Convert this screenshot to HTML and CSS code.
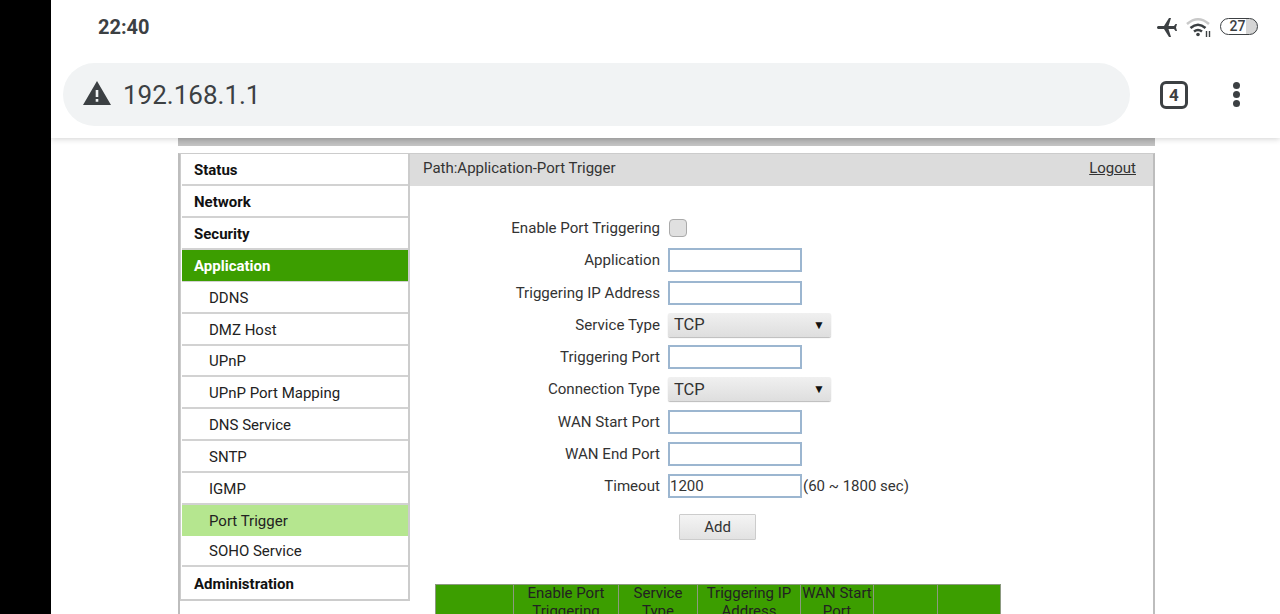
FILE: index.html
```html
<!DOCTYPE html>
<html lang="en">
<head>
<meta charset="utf-8">
<title>192.168.1.1</title>
<link rel="stylesheet" href="styles.css">
</head>
<body>
<div class="black-edge"></div>
<div class="screen">
  <header class="chrome">
    <div class="status-bar">
      <span class="clock">22:40</span>
      <div class="status-icons">
        <svg class="ic-plane" viewBox="0 0 24 24"><path transform="rotate(-90 12 12)" d="M21 16v-2l-8-5V3.5c0-.83-.67-1.5-1.5-1.5S10 2.67 10 3.5V9l-8 5v2l8-2.5V19l-2 1.5V22l3.500-1 3.500 1v-1.500L13 19v-5.500l8 2.500z"/></svg>
        <svg class="ic-wifi" viewBox="0 0 26 22"><path d="M2 8Q13 -1.500 24 8" fill="none" stroke="#c9c9c9" stroke-width="2.600"/><path d="M5.500 12Q13 5.500 20.500 12" fill="none" stroke="#3c4043" stroke-width="2.600"/><path d="M9 15.500Q13 12.500 17 15.500" fill="none" stroke="#3c4043" stroke-width="2.600"/><circle cx="13" cy="18.500" r="1.800" fill="#3c4043"/><path d="M21.500 15v6M24.500 15v6" stroke="#3c4043" stroke-width="1.400"/></svg>
        <div class="battery"><span class="battery-level">27</span></div>
      </div>
    </div>
    <div class="toolbar">
      <div class="omnibox">
        <svg class="ic-warn" viewBox="0 0 28 24"><path fill-rule="evenodd" d="M14 0 28 24H0ZM12.700 9v7h2.600V9ZM12.700 18v2.700h2.600V18Z"/></svg>
        <span class="url">192.168.1.1</span>
      </div>
      <div class="tabs-count">4</div>
      <div class="menu-dots"><i></i><i></i><i></i></div>
    </div>
  </header>

  <main class="page">
    <div class="top-strip"></div>
    <div class="frame">
      <nav class="side">
        <a class="item top">Status</a>
        <a class="item top">Network</a>
        <a class="item top">Security</a>
        <a class="item top active">Application</a>
        <a class="item">DDNS</a>
        <a class="item">DMZ Host</a>
        <a class="item">UPnP</a>
        <a class="item">UPnP Port Mapping</a>
        <a class="item">DNS Service</a>
        <a class="item">SNTP</a>
        <a class="item">IGMP</a>
        <a class="item current">Port Trigger</a>
        <a class="item">SOHO Service</a>
        <a class="item top last">Administration</a>
      </nav>
      <section class="content">
        <div class="path-bar"><span>Path:Application-Port Trigger</span><a class="logout">Logout</a></div>
        <form class="form">
          <label>Enable Port Triggering</label><div class="field"><span class="checkbox"></span></div>
          <label>Application</label><div class="field"><input type="text"></div>
          <label>Triggering IP Address</label><div class="field"><input type="text"></div>
          <label>Service Type</label><div class="field"><span class="select"><span>TCP</span><b>▼</b></span></div>
          <label>Triggering Port</label><div class="field"><input type="text"></div>
          <label>Connection Type</label><div class="field"><span class="select"><span>TCP</span><b>▼</b></span></div>
          <label>WAN Start Port</label><div class="field"><input type="text"></div>
          <label>WAN End Port</label><div class="field"><input type="text"></div>
          <label>Timeout</label><div class="field"><input type="text" value="1200"><span class="hint">(60 ~ 1800 sec)</span></div>
        </form>
        <div class="actions"><button type="button" class="add">Add</button></div>
        <table class="rules">
          <colgroup><col class="c1"><col class="c2"><col class="c3"><col class="c4"><col class="c5"><col class="c6"><col class="c7"></colgroup>
          <tr>
            <td></td>
            <td>Enable Port Triggering</td>
            <td>Service Type</td>
            <td>Triggering IP Address</td>
            <td>WAN Start Port</td>
            <td></td>
            <td></td>
          </tr>
        </table>
      </section>
    </div>
  </main>
</div>
</body>
</html>
```

FILE: styles.css
```css
* { box-sizing: border-box; }
html, body { margin: 0; height: 614px; overflow: hidden; }
body { display: flex; background: #fff; font-family: Roboto, "Liberation Sans", sans-serif; color: #333; }
.black-edge { width: 51px; flex: none; background: #000; }
.screen { flex: 1; min-width: 0; display: flex; flex-direction: column; }

.chrome { height: 138px; flex: none; padding: 0 24px 0 12px; position: relative; z-index: 1; box-shadow: 0 1px 6px rgba(0,0,0,.18); background: #fff; }
.status-bar { height: 63px; display: flex; justify-content: space-between; padding: 14px 0 0 35px; }
.clock { font-size: 20px; font-weight: 700; line-height: 26px; color: #3c4043; }
.status-icons { display: flex; align-items: flex-start; margin-right: -2px; padding-top: 2px; }
.ic-plane { width: 24px; height: 24px; fill: #3c4043; margin-top: -1px; }
.ic-wifi { width: 26px; height: 22px; margin-left: 6px; margin-top: 0; }
.battery { width: 38px; height: 17px; margin-left: 9px; margin-top: 2px; border: 1.500px solid #3c4043; border-radius: 8.500px; background: linear-gradient(90deg, #fff 70%, #d5d5d5 70%); font-size: 14px; line-height: 14px; font-weight: 500; text-align: center; color: #3c4043; }
.battery-level { display: block; margin-right: 3px; }

.toolbar { display: flex; align-items: center; height: 63px; }
.omnibox { width: 1067px; height: 63px; border-radius: 32px; background: #f1f3f4; display: flex; align-items: center; padding-left: 20px; }
.ic-warn { width: 28px; height: 24px; fill: #3c4043; margin-top: -3px; }
.url { font-size: 26px; margin: 1px 0 0 12px; color: #3c4043; }
.tabs-count { width: 28px; height: 28px; margin-left: 30px; border: 3px solid #3c4043; border-radius: 6px; font-size: 17px; font-weight: 700; line-height: 23px; text-align: center; color: #3c4043; }
.menu-dots { margin-left: 45px; display: flex; flex-direction: column; gap: 2px; }
.menu-dots i { display: block; width: 7px; height: 7px; border-radius: 50%; background: #3c4043; }

.page { flex: 1; min-height: 0; width: 977px; margin-left: 127px; }
.top-strip { height: 8px; background: linear-gradient(#b4b4b4, #c4c4c4); }
.frame { margin-top: 7px; display: flex; align-items: flex-start; height: 470px; border-left: 2px solid #bdbdbd; border-right: 2px solid #bdbdbd; border-top: 1px solid #ccc; }
.side { width: 230px; flex: none; padding: 0 0 0 2px; border-right: 2px solid #ccc; border-bottom: 2px solid #ccc; box-shadow: inset 1px 0 #ccc; background: #fff; }
.item { display: block; height: 31.800px; padding: 5.800px 0 0 27px; font-size: 15px; line-height: 21px; color: #222; border-bottom: 2px solid #d2d2d2; }
.item.top { height: 32px; padding: 6px 0 0 12px; font-weight: 700; color: #111; }
.item.active { background: #3c9e00; color: #fff; border-bottom: 1px solid #d2d2d2; }
.item.current { background: #b5e68f; padding-top: 6.500px; border-bottom: none; height: 31px; }
.item.top.last { height: 31.800px; padding-top: 6.500px; border-bottom: none; }

.content { flex: 1; min-width: 0; }
.path-bar { height: 32px; background: #dcdcdc; display: flex; justify-content: space-between; padding: 5px 17px 0 13px; font-size: 15px; line-height: 19px; color: #333; }
.logout { text-decoration: underline; }
.form { display: grid; grid-template-columns: 250px 1fr; column-gap: 8px; row-gap: 8.300px; margin-top: 30px; }
.form label { text-align: right; font-size: 15.100px; line-height: 24px; color: #333; }
.field { display: flex; align-items: center; height: 24px; }
input[type=text] { width: 134px; height: 24px; padding: 0; border: 2px solid #9cb6d0; background: #fff; font: 15px Roboto, sans-serif; color: #333; border-radius: 0; outline: none; }
.checkbox { width: 18px; height: 18px; margin-left: 1px; border: 1px solid #aaa; border-radius: 4px; background: #e0e0e0; }
.select { width: 163px; height: 24px; display: flex; align-items: center; justify-content: space-between; padding: 0 6px; background: linear-gradient(#f0f0f0, #dedede); border-radius: 2px; box-shadow: 0 1px 1px #bbb; font-size: 16.500px; color: #333; }
.select b { font-size: 12px; font-weight: 400; color: #111; }
.hint { font-size: 15px; margin-left: 1px; color: #333; }
.actions { margin: 16px 0 0 269px; }
.add { display: block; width: 77px; height: 26px; padding: 0; border: 1px solid #ccc; border-radius: 1px; background: linear-gradient(#f4f4f4, #e2e2e2); font: 15px Roboto, sans-serif; color: #333; }
.rules { margin: 44px 0 0 25px; width: 565px; table-layout: fixed; border-collapse: collapse; }
.c1 { width: 78px; } .c2 { width: 105px; } .c3 { width: 79px; } .c4 { width: 103px; } .c5 { width: 73px; } .c6 { width: 64px; } .c7 { width: 63px; }
.rules td { background: #3c9e00; border: 1px solid #8c9a80; padding: 0; height: 44px; vertical-align: top; text-align: center; font-size: 15px; line-height: 17.600px; color: #222; }
```
